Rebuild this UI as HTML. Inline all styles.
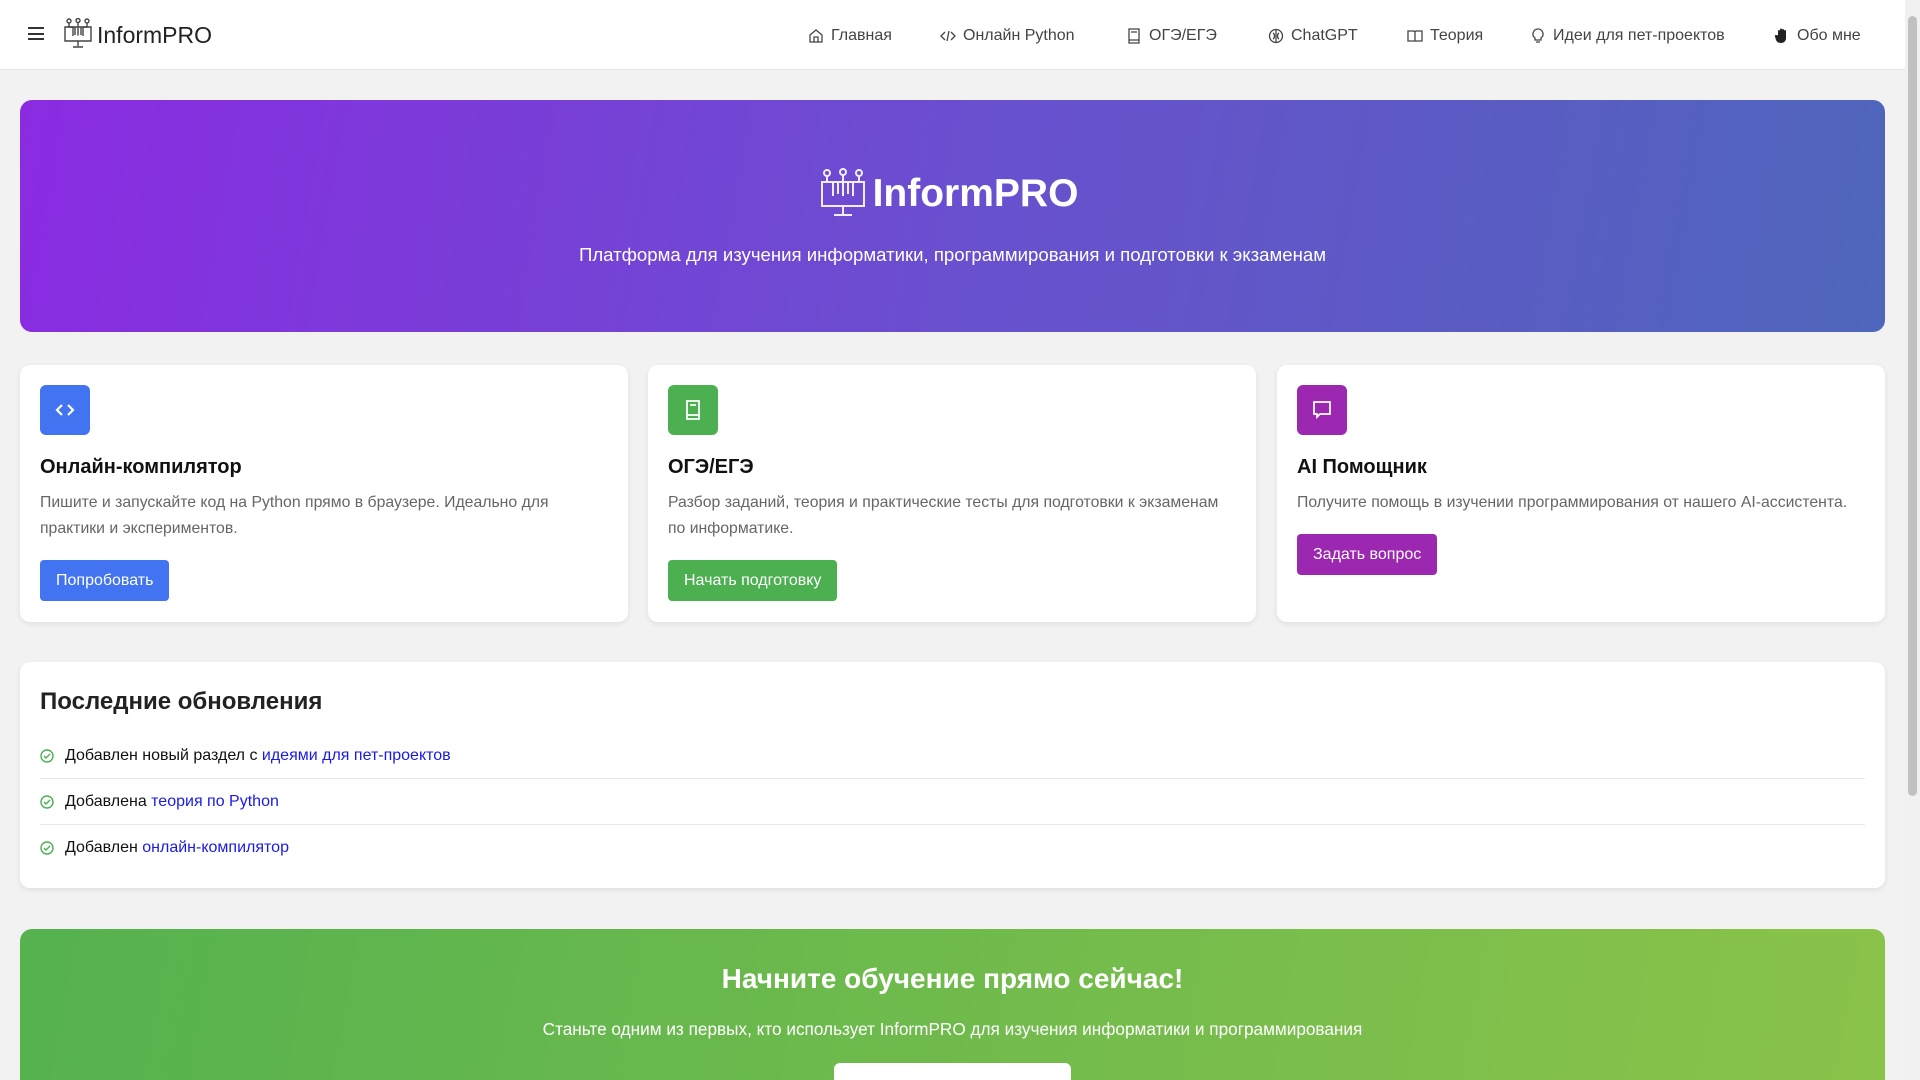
<!DOCTYPE html>
<html><head><meta charset="utf-8"><style>
*{box-sizing:border-box;margin:0;padding:0}
html,body{width:1920px;height:1080px;overflow:hidden}
body{background:#f2f2f2;font-family:"Liberation Sans","Noto Sans CJK SC",sans-serif;color:#222;position:relative}
.hdr{position:absolute;left:0;top:0;width:1905px;height:70px;background:#fff;border-bottom:1px solid #e6e6e6}
.ham{position:absolute;left:28px;top:27px;width:16px;height:13px;border-top:2px solid #333;border-bottom:2px solid #333}
.ham:after{content:"";position:absolute;left:0;top:3.5px;width:16px;height:2px;background:#333}
.logo{position:absolute;left:64px;top:18px}
.brand{position:absolute;left:97px;top:22px;font-size:23px;color:#222;font-weight:500}
.nav{position:absolute;top:27px;font-size:16px;color:#444;display:flex;align-items:center;gap:7px}
.nav svg{width:16px;height:16px}
.hero{position:absolute;left:20px;top:100px;width:1865px;height:232px;border-radius:12px;background:linear-gradient(100deg,#8a2be2 0%,#6a4fcf 50%,#4e66bb 100%);color:#fff;text-align:center}
.hero h1{position:absolute;left:0;right:0;top:72px;font-size:39px;font-weight:bold;padding-left:46px}
.hero .sub{position:absolute;left:0;right:0;top:144px;font-size:18.6px}
.card{position:absolute;top:365px;width:608px;height:257px;background:#fff;border-radius:10px;box-shadow:0 2px 6px rgba(0,0,0,.08);padding:20px}
.ic{width:50px;height:50px;border-radius:6px;display:flex;align-items:center;justify-content:center}
.card h3{font-size:20px;font-weight:bold;margin-top:21px;color:#111}
.card p{font-size:15.8px;color:#666;line-height:26px;margin-top:11px}
.btn{display:inline-block;color:#fff;font-size:16px;height:41px;line-height:41px;padding:0 16px;border-radius:4px;margin-top:18px}
.upd{position:absolute;left:20px;top:662px;width:1865px;height:226px;background:#fff;border-radius:10px;box-shadow:0 2px 6px rgba(0,0,0,.08);padding:0 20px}
.upd h2{font-size:24px;font-weight:bold;margin-top:26px;color:#222}
.it{height:46px;display:flex;align-items:center;font-size:16px;color:#111;border-bottom:1px solid #e8e8e8}
.it:last-child{border-bottom:none}
.it svg{margin-right:11px}
.it a{color:#1a1ae6;text-decoration:none}
.cta{position:absolute;left:20px;top:929px;width:1865px;height:200px;border-radius:12px;background:linear-gradient(100deg,#55b24f,#8bc34a);color:#fff;text-align:center}
.cta h2{font-size:28px;font-weight:bold;margin-top:34px}
.cta p{font-size:17.2px;margin-top:24px}
.cta .wb{position:absolute;left:814px;top:134px;width:237px;height:60px;background:#fff;border-radius:6px}
.sb{position:absolute;left:1905px;top:0;width:15px;height:1080px;background:#f1f1f1}
.th{position:absolute;left:1908px;top:16px;width:9px;height:780px;background:#c1c1c1;border-radius:5px}
</style></head><body>
<div class="hdr">
<div class="ham"></div>
<svg class="logo" width="28" height="32" viewBox="0 0 28 32" fill="none" stroke="#444" stroke-width="1.4"><circle cx="5" cy="3" r="2"/><circle cx="14" cy="2.5" r="2"/><circle cx="23" cy="3" r="2"/><path d="M1 9h26v14H1z"/><path d="M5 5v4h4v9M14 4.5v13M23 5v4h-4v9M11 9v8M17 9v8M14 23v5M9 29h10"/></svg>
<div class="brand">InformPRO</div>
<div class="nav" style="left:808px"><svg viewBox="0 0 16 16" fill="none" stroke="#444" stroke-width="1.3"><path d="M2 7l6-5 6 5v7H2z M6 14v-5h4v5"/></svg>Главная</div>
<div class="nav" style="left:940px"><svg viewBox="0 0 16 16" fill="none" stroke="#444" stroke-width="1.3"><path d="M5 4L1 8l4 4M11 4l4 4-4 4M9 3L7 13"/></svg>Онлайн Python</div>
<div class="nav" style="left:1126px"><svg viewBox="0 0 16 16" fill="none" stroke="#444" stroke-width="1.3"><path d="M3 1h10v14H3z M5 4h6 M3 12h10"/></svg>ОГЭ/ЕГЭ</div>
<div class="nav" style="left:1268px"><svg viewBox="0 0 16 16" fill="none" stroke="#444" stroke-width="1.3"><circle cx="8" cy="8" r="6.5"/><path d="M8 2v12M5 5c2 1 2 5 0 6M11 5c-2 1-2 5 0 6"/></svg>ChatGPT</div>
<div class="nav" style="left:1407px"><svg viewBox="0 0 16 16" fill="none" stroke="#444" stroke-width="1.3"><path d="M1 3h6l1 1 1-1h6v10H1z M8 4v9"/></svg>Теория</div>
<div class="nav" style="left:1530px"><svg viewBox="0 0 16 16" fill="none" stroke="#444" stroke-width="1.3"><path d="M8 1a5 5 0 0 0-3 9v2h6v-2a5 5 0 0 0-3-9z M6 14h4"/></svg>Идеи для пет-проектов</div>
<div class="nav" style="left:1774px"><svg viewBox="0 0 16 16"><path fill="#222" d="M4 7V3a1 1 0 0 1 2 0V1.5a1 1 0 0 1 2 0V2a1 1 0 0 1 2 0v1a1 1 0 0 1 2 0v7c0 3-2 5-5 5s-4-1-5-3L1 8.5a1 1 0 0 1 2-1z"/></svg>Обо мне</div>
</div>

<div class="hero">
<svg style="position:absolute;left:800px;top:68px" width="46" height="52" viewBox="0 0 46 52" fill="none" stroke="#fff" stroke-width="2" opacity=".9"><circle cx="7" cy="5" r="3"/><circle cx="23" cy="4" r="3"/><circle cx="39" cy="5" r="3"/><path d="M2 14h42v24H2z"/><path d="M7 8v6h6v14M23 7v21M39 8v6h-6v14M18 14v12M28 14v12M23 38v8M14 47h18"/></svg>
<h1>InformPRO</h1>
<div class="sub">Платформа для изучения информатики, программирования и подготовки к экзаменам</div>
</div>

<div class="card" style="left:20px">
<div class="ic" style="background:#4273f0"><svg width="22" height="22" viewBox="0 0 22 22" fill="none" stroke="#fff" stroke-width="2.2"><path d="M8 6l-5 5 5 5M14 6l5 5-5 5"/></svg></div>
<h3>Онлайн-компилятор</h3>
<p>Пишите и запускайте код на Python прямо в браузере. Идеально для<br>практики и экспериментов.</p>
<span class="btn" style="background:#4273f0">Попробовать</span>
</div>
<div class="card" style="left:648px">
<div class="ic" style="background:#4caf50"><svg width="22" height="22" viewBox="0 0 22 22" fill="none" stroke="#fff" stroke-width="1.8"><path d="M5 2h12v18H5z M8 6h6 M5 16h12"/></svg></div>
<h3>ОГЭ/ЕГЭ</h3>
<p>Разбор заданий, теория и практические тесты для подготовки к экзаменам<br>по информатике.</p>
<span class="btn" style="background:#4caf50">Начать подготовку</span>
</div>
<div class="card" style="left:1277px">
<div class="ic" style="background:#9c27b0"><svg width="22" height="22" viewBox="0 0 22 22" fill="none" stroke="#fff" stroke-width="1.8"><path d="M3 3h16v12H9l-3 3v-3H3z"/></svg></div>
<h3>AI Помощник</h3>
<p>Получите помощь в изучении программирования от нашего AI-ассистента.</p>
<span class="btn" style="background:#9c27b0">Задать вопрос</span>
</div>

<div class="upd">
<h2>Последние обновления</h2>
<div style="margin-top:17px">
<div class="it"><svg width="14" height="14" viewBox="0 0 14 14" fill="none" stroke="#4caf50" stroke-width="1.4"><circle cx="7" cy="7" r="6"/><path d="M4 7l2 2 4-4"/></svg>Добавлен новый раздел с&nbsp;<a>идеями для пет-проектов</a></div>
<div class="it"><svg width="14" height="14" viewBox="0 0 14 14" fill="none" stroke="#4caf50" stroke-width="1.4"><circle cx="7" cy="7" r="6"/><path d="M4 7l2 2 4-4"/></svg>Добавлена&nbsp;<a>теория по Python</a></div>
<div class="it"><svg width="14" height="14" viewBox="0 0 14 14" fill="none" stroke="#4caf50" stroke-width="1.4"><circle cx="7" cy="7" r="6"/><path d="M4 7l2 2 4-4"/></svg>Добавлен&nbsp;<a>онлайн-компилятор</a></div>
</div>
</div>

<div class="cta">
<h2>Начните обучение прямо сейчас!</h2>
<p>Станьте одним из первых, кто использует InformPRO для изучения информатики и программирования</p>
<div class="wb"></div>
</div>
<div class="sb"></div><div class="th"></div>
</body></html>
